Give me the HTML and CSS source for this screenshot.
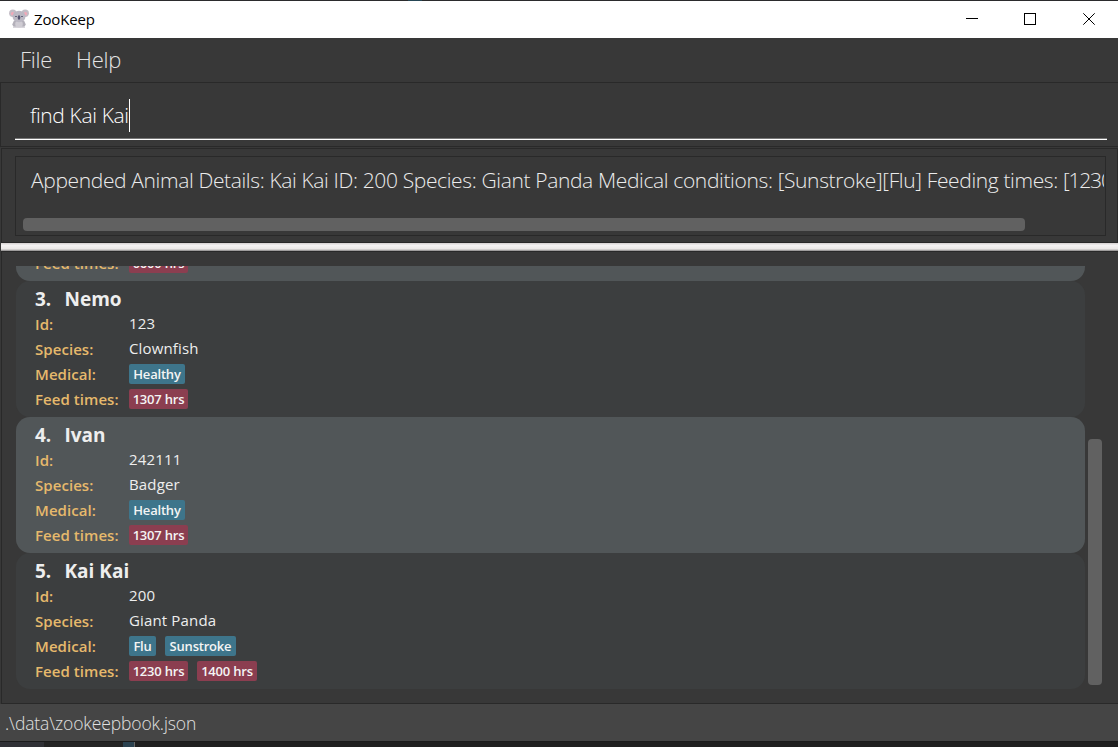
FILE: index.html
```html
<!DOCTYPE html>
<html lang="en">
<head>
<meta charset="utf-8">
<title>ZooKeep</title>
<link rel="stylesheet" href="styles.css">
</head>
<body>
<div class="backdrop-top"></div>
<header class="titlebar">
  <svg class="logo" width="20" height="20" viewBox="0 0 20 20">
    <path d="M5 11.500h10l1.800 4L15 18.500H5L3.200 15.500z" fill="#b3b0b9"/>
    <ellipse cx="10" cy="15" rx="3.800" ry="3.500" fill="#cfccd3"/>
    <circle cx="3.800" cy="4.300" r="3.700" fill="#c3bdc6"/>
    <circle cx="16.200" cy="4.300" r="3.700" fill="#c3bdc6"/>
    <circle cx="3.600" cy="4.800" r="1.700" fill="#f2a9b8"/>
    <circle cx="16.400" cy="4.800" r="1.700" fill="#f2a9b8"/>
    <ellipse cx="10" cy="7.500" rx="6.500" ry="5.800" fill="#bbb8c3"/>
    <path d="M6 7.500h2M12 7.500h2" stroke="#66647b" stroke-width="1"/>
    <ellipse cx="10" cy="8.500" rx="1.300" ry="2.300" fill="#55546f"/>
    <path d="M4 18.300h3.500M12.500 18.300H16" stroke="#d8d5db" stroke-width="1.500"/>
  </svg>
  <span class="title">ZooKeep</span>
  <svg class="controls" width="132" height="14" viewBox="0 0 132 14" fill="none" stroke="#000" stroke-width="1">
    <path d="M0 5.500h12"/>
    <rect x="58.500" y="0.500" width="11" height="11"/>
    <path d="M117.300 0.300l11.400 11.400M128.700 0.300l-11.400 11.400"/>
  </svg>
</header>
<nav class="menu"><span class="menu-file">File</span><span class="menu-help">Help</span></nav>
<section class="command">
  <div class="field"><span class="command-text">find Kai Kai</span><i class="caret"></i></div>
</section>
<section class="result">
  <div class="result-box">
    <div class="result-text">Appended Animal Details: Kai Kai ID: 200 Species: Giant Panda Medical conditions: [Sunstroke][Flu] Feeding times: <span class="times">[1230</span></div>
    <div class="hbar"></div>
  </div>
</section>
<div class="divider"></div>
<main class="list">
  <div class="cards">
    <article class="card even clipped">
      <div class="row"><span class="label">Feed times:</span><span class="chip time">0600 hrs</span></div>
    </article>
    <article class="card">
      <h2><span class="num">3.</span><span class="name">Nemo</span></h2>
      <div class="row"><span class="label">Id:</span><span class="value">123</span></div>
      <div class="row"><span class="label">Species:</span><span class="value">Clownfish</span></div>
      <div class="row"><span class="label">Medical:</span><span class="chip">Healthy</span></div>
      <div class="row"><span class="label">Feed times:</span><span class="chip time">1307 hrs</span></div>
    </article>
    <article class="card even">
      <h2><span class="num">4.</span><span class="name">Ivan</span></h2>
      <div class="row"><span class="label">Id:</span><span class="value">242111</span></div>
      <div class="row"><span class="label">Species:</span><span class="value">Badger</span></div>
      <div class="row"><span class="label">Medical:</span><span class="chip">Healthy</span></div>
      <div class="row"><span class="label">Feed times:</span><span class="chip time">1307 hrs</span></div>
    </article>
    <article class="card">
      <h2><span class="num">5.</span><span class="name">Kai Kai</span></h2>
      <div class="row"><span class="label">Id:</span><span class="value">200</span></div>
      <div class="row"><span class="label">Species:</span><span class="value">Giant Panda</span></div>
      <div class="row"><span class="label">Medical:</span><span class="chip flu">Flu</span><span class="chip sun">Sunstroke</span></div>
      <div class="row"><span class="label">Feed times:</span><span class="chip time">1230 hrs</span><span class="chip time wide">1400 hrs</span></div>
    </article>
  </div>
  <div class="vbar"></div>
</main>
<footer class="status"><span>.\data\zookeepbook.json</span></footer>
<div class="backdrop-bottom"></div>
</body>
</html>
```
FILE: styles.css
```css
* { box-sizing: border-box; }
body {
  margin: 0;
  width: 1118px;
  height: 747px;
  overflow: hidden;
  display: flex;
  flex-direction: column;
  background: #383838;
  font-family: "Open Sans", "Noto Sans", sans-serif;
  white-space: nowrap;
}
.backdrop-top {
  height: 1px;
  background: linear-gradient(90deg, #2b2b2d 408px, #264655 408px, #264655 422px, #2b2b2d 422px);
}
.titlebar {
  height: 37px;
  display: flex;
  align-items: center;
  background: #fff;
  padding: 0 20px 2px 9px;
}
.logo { margin-top: 1px; }
.title {
  margin-left: 5px;
  font-size: 15px;
  letter-spacing: -0.15px;
  color: #000;
}
.controls { margin: 2px 0 0 auto; }
.menu {
  height: 44px;
  padding-left: 20px;
  display: flex;
  gap: 24px;
  line-height: 43px;
  font-size: 22px;
  font-weight: 300;
  letter-spacing: -0.25px;
  color: #e4e4e4;
}
.command {
  height: 65px;
  border: 1px solid #292929;
  border-right-width: 0;
  padding: 10px 11px 0 14px;
}
.field {
  height: 47px;
  border-bottom: 1px solid #fff;
  box-shadow: inset 0 -1px #777;
  padding-left: 15px;
  display: flex;
}
.command-text {
  line-height: 44px;
  font-size: 21px;
  font-weight: 300;
  letter-spacing: -0.36px;
  color: #fff;
}
.caret { width: 1px; height: 33px; margin-top: 6px; background: #fff; }
.result {
  height: 95px;
  margin: 1px 0 0 1px;
  border: 1px solid #292929;
  padding: 7px 11px 0 13px;
}
.result-box {
  height: 80px;
  border: 1px solid #292929;
  padding: 0 1px 0 7px;
}
.result-text {
  height: 61px;
  padding-left: 8px;
  line-height: 46px;
  font-size: 21px;
  font-weight: 300;
  letter-spacing: -0.36px;
  color: #ececec;
  overflow: hidden;
}
.times { letter-spacing: -1.2px; }
.hbar { width: 1002px; height: 13px; border-radius: 4px; background: #616161; }
.divider {
  height: 8px;
  margin-left: 1px;
  background: linear-gradient(#d4d0d0, #f5f3f3 30%, #ebe8e7 75%, #858383);
}
.list {
  height: 453px;
  margin-left: 1px;
  border: 1px solid #292929;
  border-right-width: 0;
  padding: 14px 0 0 14px;
  display: flex;
}
.cards { width: 1069px; height: 423px; overflow: hidden; }
.card {
  height: 136px;
  padding: 5px 19px;
  border-radius: 14px;
  background: #3c3e3f;
  color: #eee;
}
.even { background: #515658; }
.clipped { margin-top: -121px; padding-top: 106px; }
h2 {
  height: 26px;
  margin: 0;
  line-height: 27px;
  font-size: 19px;
  font-weight: 700;
  display: flex;
}
.num { width: 29.5px; }
.row { height: 25px; display: flex; align-items: flex-start; }
.label {
  width: 94px;
  line-height: 25px;
  font-size: 15px;
  font-weight: 600;
  letter-spacing: 0.06px;
  color: #e6b96c;
}
.value { line-height: 23px; font-size: 15px; letter-spacing: 0.15px; }
.chip {
  width: 56px;
  height: 20px;
  margin: 2px 9px 3px 0;
  border-radius: 2px;
  background: #3e758b;
  line-height: 20px;
  text-align: center;
  font-size: 13px;
  font-weight: 600;
  letter-spacing: -0.2px;
  color: #f4f4f4;
}
.time { width: 59px; background: #8b3e50; }
.wide { width: 60px; }
.flu { width: 27px; }
.sun { width: 71px; }
.vbar {
  width: 14px;
  height: 246px;
  margin: 173px 0 0 3px;
  border-radius: 4px;
  background: #616161;
}
.status {
  height: 37px;
  padding-left: 5px;
  background: #454545;
  line-height: 38px;
  font-size: 17.500px;
  font-weight: 300;
  letter-spacing: -0.12px;
  color: #e0e0e0;
}
.backdrop-bottom {
  height: 6px;
  border-top: 1px solid #1c1c1c;
  background: linear-gradient(90deg, #303136 44px, #242424 44px, #242424 123px, #2b4250 123px, #2b4250 134px, #666 134px, #666 135px, #202020 135px);
}
```
